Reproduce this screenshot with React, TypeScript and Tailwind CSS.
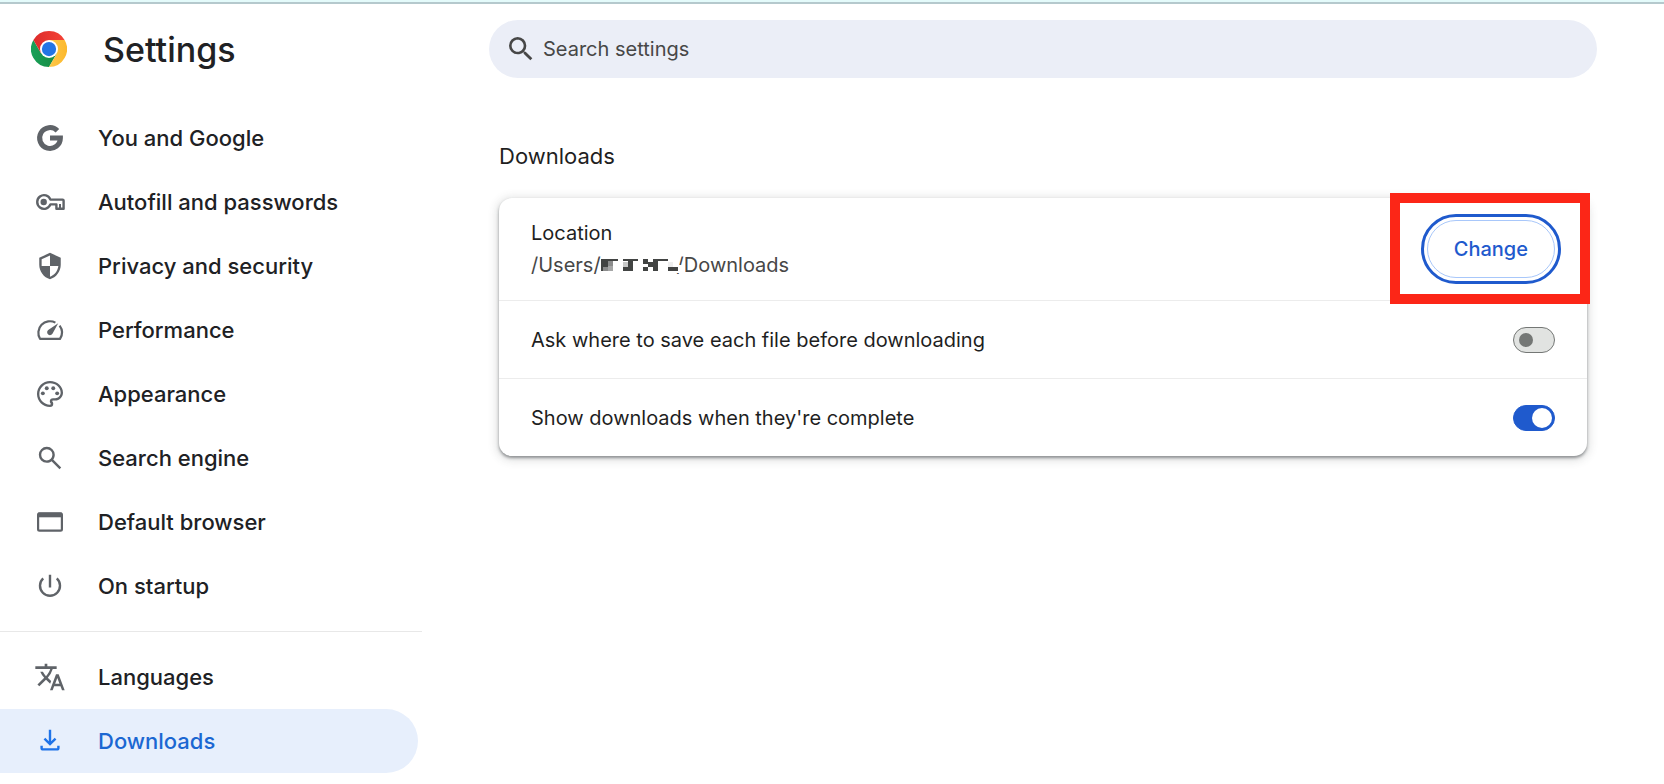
import { useState, type ReactNode } from "react";

const solid = "h-8 w-8 shrink-0 fill-current";
const line = "h-8 w-8 shrink-0 fill-none stroke-current";

function GoogleIcon() {
  return (
    <svg viewBox="0 0 32 32" className={line} strokeWidth="5" aria-hidden="true">
      <path d="M23.4 8.7A10.4 10.4 0 1 0 26.4 16H16" />
    </svg>
  );
}

function KeyIcon() {
  return (
    <svg viewBox="0 0 32 32" className={line} strokeWidth="2.4" aria-hidden="true">
      <path d="M16.4 13.6H28.6Q29.6 13.6 29.6 14.6V22.8H22.4V18.4H16.4A6.8 6.8 0 1 1 16.4 13.6Z" strokeLinejoin="round" />
      <path d="M26 18V22" strokeWidth="2" />
      <circle cx="9.7" cy="16" r="3.2" fill="currentColor" stroke="none" />
    </svg>
  );
}

function ShieldIcon() {
  return (
    <svg viewBox="-1.4 -1.4 26.8 26.8" className={solid} aria-hidden="true">
      <path d="M12 1 3 5v6c0 5.55 3.84 10.74 9 12 5.16-1.26 9-6.45 9-12V5l-9-4zm0 10.99h7c-.53 4.12-3.28 7.79-7 8.94V12H5V6.3l7-3.11v8.8z" />
    </svg>
  );
}

function SpeedIcon() {
  return (
    <svg viewBox="0 0 32 32" className={line} strokeWidth="2.2" strokeLinejoin="round" aria-hidden="true">
      <path d="M21.4 8.6A11.6 11.6 0 0 0 6 24.8H26A11.6 11.6 0 0 0 25.6 11.6" />
      <path d="M24.2 9.2 18.6 19.6A2.9 2.9 0 1 1 14.2 16Z" fill="currentColor" stroke="none" />
    </svg>
  );
}

function PaletteIcon() {
  return (
    <svg viewBox="-.3 -.3 24.6 24.6" className={solid} aria-hidden="true">
      <path d="M12 22C6.49 22 2 17.51 2 12S6.49 2 12 2s10 4.04 10 9c0 3.31-2.69 6-6 6h-1.77c-.28 0-.5.22-.5.5 0 .12.05.23.13.33.41.47.64 1.06.64 1.67A2.5 2.5 0 0 1 12 22zm0-18.2c-4.41 0-8.2 3.69-8.2 8.2s3.69 8.2 8.2 8.2c.28 0 .6-.22.6-.6a.54.54 0 0 0-.14-.35c-.41-.46-.63-1.05-.63-1.65a2.5 2.5 0 0 1 2.5-2.4H16c2.31 0 4.2-1.89 4.2-4.2 0-3.96-3.69-7.2-8.2-7.2z" />
      <circle cx="6.5" cy="11.5" r="1.5" />
      <circle cx="9.5" cy="7.6" r="1.5" />
      <circle cx="14.5" cy="7.6" r="1.5" />
      <circle cx="17.5" cy="11.5" r="1.5" />
    </svg>
  );
}

function SearchIcon() {
  return (
    <svg viewBox="0 -960 960 960" className={solid} aria-hidden="true">
      <path d="M765-144 526-383q-30 22-65.792 34.5T384.035-336Q284-336 214-406t-70-170q0-100 70-170t170-70q100 0 170 70t70 170.035q0 40.381-12.5 76.173T577-434l239 239-51 51ZM384-408q70 0 119-49t49-119q0-70-49-119t-119-49q-70 0-119 49t-49 119q0 70 49 119t119 49Z" />
    </svg>
  );
}

function BrowserIcon() {
  return (
    <svg viewBox="0 0 32 32" className={line} strokeWidth="2.2" aria-hidden="true">
      <rect x="4.1" y="7.3" width="23.8" height="17.4" rx="1.4" />
      <path d="M4 9H28" strokeWidth="4.6" />
    </svg>
  );
}

function PowerIcon() {
  return (
    <svg viewBox="0 0 32 32" className={line} strokeWidth="2.4" aria-hidden="true">
      <path d="M16 4.7V17.4M9.2 8.4A10 10 0 1 0 22.8 8.4" />
    </svg>
  );
}

function TranslateIcon() {
  return (
    <svg viewBox="0 0 24 24" className={solid} aria-hidden="true">
      <path d="m12.87 15.07-2.54-2.51.03-.03A17.52 17.52 0 0 0 14.07 6H17V4h-7V2H8v2H1v1.99h11.17C11.5 7.92 10.44 9.75 9 11.35 8.07 10.32 7.3 9.19 6.69 8h-2c.73 1.63 1.73 3.17 2.98 4.56l-5.09 5.02L4 19l5-5 3.11 3.11.76-2.04zM18.5 10h-2L12 22h2l1.12-3h4.75L21 22h2l-4.5-12zm-2.62 7 1.62-4.33L19.12 17h-3.24z" />
    </svg>
  );
}

function DownloadIcon() {
  return (
    <svg viewBox="0 -960 960 960" className={solid} aria-hidden="true">
      <path d="M480-336 288-528l51-51 105 105v-342h72v342l105-105 51 51-192 192ZM263.717-192Q234-192 213-213.15T192-264v-72h72v72h432v-72h72v72q0 29.7-21.162 50.85Q725.676-192 695.96-192H263.717Z" />
    </svg>
  );
}

function ChromeLogo() {
  return (
    <svg viewBox="0 0 48 48" className="h-9 w-9 shrink-0" aria-hidden="true">
      <defs>
        <linearGradient id="red" x1="0" x2="1"><stop stopColor="#dd2c2b" /><stop offset="1" stopColor="#f44336" /></linearGradient>
        <linearGradient id="yellow" x1="0" x2="1"><stop stopColor="#fdc84a" /><stop offset="1" stopColor="#fcb82c" /></linearGradient>
        <linearGradient id="green" x1="0" x2="1"><stop stopColor="#18a058" /><stop offset="1" stopColor="#188b42" /></linearGradient>
      </defs>
      <path fill="url(#green)" d="M24 48A24 24 0 0 1 3.215 12L13.608 30 24 24 34.392 30Z" />
      <path fill="url(#yellow)" d="M44.785 12A24 24 0 0 1 24 48L34.392 30 24 24V12Z" />
      <path fill="url(#red)" d="M3.215 12A24 24 0 0 1 44.785 12H24V24L13.608 30Z" />
      <circle cx="24" cy="24" r="12" fill="#fff" />
      <circle cx="24" cy="24" r="9.5" fill="#2374e5" />
    </svg>
  );
}

function NavItem({ icon, label, active }: { icon: ReactNode; label: string; active?: boolean }) {
  return (
    <li>
      <a
        href="#"
        aria-current={active ? "page" : undefined}
        className={
          active
            ? "mr-1 flex h-16 items-center gap-8 rounded-r-full bg-[#e7effc] pl-[34px] text-[#1b67d2]"
            : "mr-1 flex h-16 items-center gap-8 rounded-r-full pl-[34px] text-[#202124]"
        }
      >
        <span className={active ? "text-[#1f73e8]" : "text-[#5f6368]"}>{icon}</span>
        {label}
      </a>
    </li>
  );
}

function ToggleRow({ id, label, initial }: { id: string; label: string; initial: boolean }) {
  const [on, setOn] = useState(initial);
  return (
    <div className="flex h-[78px] items-center justify-between border-t border-[#ececec] px-8">
      <label htmlFor={id}>{label}</label>
      <input
        id={id}
        type="checkbox"
        role="switch"
        checked={on}
        onChange={(e) => setOn(e.target.checked)}
        className="flex h-[26px] w-[42px] appearance-none items-center rounded-full border border-[#747775] bg-[#e1e3e1] px-[5px] before:h-[14px] before:w-[14px] before:rounded-full before:bg-[#747775] checked:justify-end checked:border-[#1f5acd] checked:bg-[#1f5acd] checked:px-[2px] checked:before:h-5 checked:before:w-5 checked:before:bg-white"
      />
    </div>
  );
}

function RedactedName() {
  return (
    <svg viewBox="0 0 84 16" className="relative -mr-2 h-4 w-[84px]" shapeRendering="crispEdges" aria-hidden="true">
      <path fill="#fff" d="M0 2H78V8H84V16H0Z" />
      <path fill="#424443" d="M0 2H17V4H7V10H2V14H0ZM22 2H37V4H32V14H22V10H27V4H22ZM42 2H47V5H52V2H67V4H57V14H52V10H47V14H42V10H47V7H42ZM67 10H77V14H67Z" />
      <path fill="#8b8c8c" d="M2 10H7V14H2ZM7 4H12V9H7Z" />
      <path fill="#a5a6a6" d="M7 9H12V14H7Z" />
      <path fill="#c8c9c9" d="M22 5H27V10H22Z" />
      <path fill="#eeeeee" d="M67 5H72V10H67Z" />
    </svg>
  );
}

export default function App() {
  return (
    <div className="min-h-screen border-t-2 border-[#e4fbfb] bg-white font-['Inter','Liberation_Sans',sans-serif] text-[#1f1f1f]">
      <div className="flex border-t-2 border-[#b5c9cd]">
        <aside className="w-[422px] shrink-0">
          <div className="flex h-[90px] items-center gap-9 pl-[31px]">
            <ChromeLogo />
            <h1 className="text-[34px] font-medium text-[#202124]">Settings</h1>
          </div>
          <nav className="pt-3 text-[22px] font-medium">
            <ul>
              <NavItem icon={<GoogleIcon />} label="You and Google" />
              <NavItem icon={<KeyIcon />} label="Autofill and passwords" />
              <NavItem icon={<ShieldIcon />} label="Privacy and security" />
              <NavItem icon={<SpeedIcon />} label="Performance" />
              <NavItem icon={<PaletteIcon />} label="Appearance" />
              <NavItem icon={<SearchIcon />} label="Search engine" />
              <NavItem icon={<BrowserIcon />} label="Default browser" />
              <NavItem icon={<PowerIcon />} label="On startup" />
            </ul>
            <hr className="my-[13px] border-[#e8e8e8]" />
            <ul>
              <NavItem icon={<TranslateIcon />} label="Languages" />
              <NavItem icon={<DownloadIcon />} label="Downloads" active />
            </ul>
          </nav>
        </aside>

        <main className="min-w-0 flex-1 px-[67px] pt-4">
          <label className="flex h-[58px] items-center gap-[6px] rounded-full bg-[#ebeef7] px-4 text-[#474747]">
            <svg viewBox="0 0 24 24" className={solid} aria-hidden="true">
              <path d="M15.5 14h-.79l-.28-.27A6.471 6.471 0 0 0 16 9.5 6.5 6.5 0 1 0 9.5 16c1.61 0 3.09-.59 4.23-1.57l.27.28v.79l5 4.99L20.49 19l-4.99-5zm-6 0C7.01 14 5 11.99 5 9.5S7.01 5 9.5 5 14 7.01 14 9.5 11.99 14 9.5 14z" />
            </svg>
            <input
              type="search"
              aria-label="Search settings"
              placeholder="Search settings"
              className="h-8 min-w-0 flex-1 bg-transparent text-[20px] outline-none placeholder:text-[#474747]"
            />
          </label>

          <section className="px-[10px] pt-[62px]">
            <h2 className="text-[22px] leading-8">Downloads</h2>
            <div className="mt-[26px] rounded-[13px] bg-white text-[20px] shadow-[0_2px_3px_rgba(60,64,67,0.5),0_2px_10px_2px_rgba(60,64,67,0.18)]">
              <div className="flex items-center justify-between px-8 py-[19px]">
                <div className="leading-8">
                  <div>Location</div>
                  <div className="flex items-center text-[#474747]">
                    <span>/Users/</span>
                    <RedactedName />
                    <span>/Downloads</span>
                  </div>
                </div>
                <div className="relative">
                  <div className="absolute -top-[27px] -right-[35px] -bottom-[26px] -left-[37px] border-10 border-[#fc2617]" />
                  <button
                    type="button"
                    className="relative h-[58px] rounded-full border border-[#a8c7fa] px-[26px] font-medium text-[#1f5acd] outline-3 outline-offset-3 outline-[#1f5acd]"
                  >
                    Change
                  </button>
                </div>
              </div>
              <ToggleRow id="ask" label="Ask where to save each file before downloading" initial={false} />
              <ToggleRow id="show" label="Show downloads when they're complete" initial />
            </div>
          </section>
        </main>
      </div>
    </div>
  );
}
